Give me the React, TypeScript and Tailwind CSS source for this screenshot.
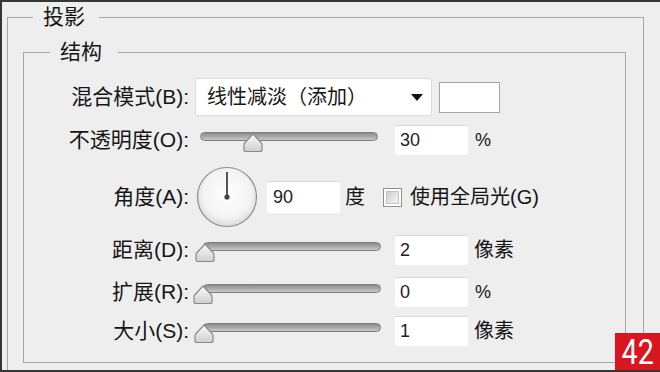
import React from 'react';

// slider thumb: pointed top, rounded base
const Thumb: React.FC = () => (
  <svg width="20" height="20" viewBox="0 0 20 20">
    <defs>
      <linearGradient id="thumbFill" x1="0" y1="0" x2="0" y2="1">
        <stop offset="0" stopColor="#fbfbfb" />
        <stop offset="1" stopColor="#cfcfcf" />
      </linearGradient>
    </defs>
    <path
      d="M10 1 L18 9.5 Q19 10.5 19 12 L19 16.5 Q19 18.5 17 18.5 L3 18.5 Q1 18.5 1 16.5 L1 12 Q1 10.5 2 9.5 Z"
      fill="url(#thumbFill)"
      stroke="#8a8a8a"
      strokeWidth="1.2"
    />
  </svg>
);

const Slider: React.FC<{ value: number }> = ({ value }) => (
  <div className="relative w-[178px] h-[21px] self-start mt-[7px]">
    <div className="h-[9px] rounded-full border border-[#7d7d7d] bg-gradient-to-b from-[#8c8c8c] via-[#a9a9a9] to-[#c9c9c9]" />
    <div className="absolute top-[1px] -ml-[10px]" style={{ left: `${value}%` }}>
      <Thumb />
    </div>
  </div>
);

const NumBox: React.FC<{ value: string }> = ({ value }) => (
  <div className="w-[73px] h-[30px] bg-white border-t border-[#d6d6d6] rounded-[2px] flex items-center pl-[5px] text-[18px] text-[#222]">
    {value}
  </div>
);

const Label: React.FC<{ children: React.ReactNode }> = ({ children }) => (
  <div className="w-[165px] text-right text-[21px] text-[#151515] shrink-0 whitespace-nowrap">{children}</div>
);

export default function App() {
  return (
    <div className="relative w-[660px] h-[372px] overflow-hidden bg-[#eeeeee] border-l-2 border-t-2 border-b-2 border-[#363636] font-['Liberation_Sans','Noto_Sans_CJK_SC',sans-serif]">
      <fieldset className="ml-[5px] mt-[2px] w-[637px] h-[420px] border border-[#a6a6a6] pl-[15px]">
        <legend className="ml-[10px] pl-[10px] pr-[14px] text-[21px] leading-[26px] text-[#151515]">投影</legend>

        <fieldset className="mt-[10px] w-[603px] border border-[#a6a6a6] pb-[16px]">
          <legend className="ml-[26px] pl-[10px] pr-[16px] text-[21px] leading-[24px] text-[#151515]">结构</legend>

          {/* 混合模式 */}
          <div className="mt-[14px] h-[38px] flex items-center">
            <Label>混合模式(B):</Label>
            <div className="ml-[6px] w-[237px] h-[38px] bg-white border border-[#dcdcdc] rounded-[2px] flex items-center pl-[11px] pr-[8px] text-[20px] text-[#151515]">
              <span className="flex-1 whitespace-nowrap">线性减淡（添加）</span>
              <svg width="12" height="7" viewBox="0 0 12 7">
                <polygon points="0,0 12,0 6,7" fill="#111" />
              </svg>
            </div>
            <div className="ml-[7px] w-[61px] h-[31px] bg-white border border-[#a3a3a3]" />
          </div>

          {/* 不透明度 */}
          <div className="mt-[9px] h-[30px] flex items-center">
            <Label>不透明度(O):</Label>
            <div className="ml-[11px] flex h-full">
              <Slider value={30} />
            </div>
            <div className="ml-[17px]">
              <NumBox value="30" />
            </div>
            <span className="ml-[7px] text-[18px] text-[#151515]">%</span>
          </div>

          {/* 角度 */}
          <div className="mt-[12px] h-[60px] flex items-center">
            <Label>角度(A):</Label>
            <svg className="ml-[7px] shrink-0" width="62" height="62" viewBox="0 0 62 62">
              <defs>
                <radialGradient id="dialFill" cx="0.5" cy="0.45" r="0.55">
                  <stop offset="0" stopColor="#ffffff" />
                  <stop offset="0.75" stopColor="#f3f3f3" />
                  <stop offset="1" stopColor="#d9d9d9" />
                </radialGradient>
              </defs>
              <circle cx="31" cy="31" r="29.5" fill="url(#dialFill)" stroke="#8e8e8e" strokeWidth="1.2" />
              <line x1="31" y1="31" x2="31" y2="6" stroke="#555" strokeWidth="2" />
              <circle cx="31" cy="31" r="2.6" fill="#444" />
            </svg>
            <div className="ml-[9px] w-[73px] h-[32px] bg-white border-t border-[#d6d6d6] rounded-[2px] flex items-center pl-[6px] text-[18px] text-[#222]">
              90
            </div>
            <span className="ml-[5px] text-[20px] text-[#151515]">度</span>
            <div className="ml-[18px] w-[19px] h-[19px] border border-[#8f8f8f] bg-white p-[2px]">
              <div className="w-full h-full bg-gradient-to-br from-[#cfcfcf] to-[#f5f5f5] border border-[#c2c2c2]" />
            </div>
            <span className="ml-[8px] text-[20px] text-[#151515] whitespace-nowrap">使用全局光(G)</span>
          </div>

          {/* 距离 */}
          <div className="mt-[8px] h-[30px] flex items-center">
            <Label>距离(D):</Label>
            <div className="ml-[14px] flex h-full">
              <Slider value={1} />
            </div>
            <div className="ml-[14px]">
              <NumBox value="2" />
            </div>
            <span className="ml-[6px] text-[20px] text-[#151515]">像素</span>
          </div>

          {/* 扩展 */}
          <div className="mt-[12px] h-[30px] flex items-center">
            <Label>扩展(R):</Label>
            <div className="ml-[14px] flex h-full">
              <Slider value={0} />
            </div>
            <div className="ml-[14px]">
              <NumBox value="0" />
            </div>
            <span className="ml-[7px] text-[18px] text-[#151515]">%</span>
          </div>

          {/* 大小 */}
          <div className="mt-[9px] h-[30px] flex items-center">
            <Label>大小(S):</Label>
            <div className="ml-[14px] flex h-full">
              <Slider value={0.5} />
            </div>
            <div className="ml-[14px]">
              <NumBox value="1" />
            </div>
            <span className="ml-[6px] text-[20px] text-[#151515]">像素</span>
          </div>
        </fieldset>
      </fieldset>

      {/* page badge */}
      <div className="absolute right-0 -bottom-[2px] w-[45px] h-[39px] bg-[#d9161f] flex items-center justify-center">
        <span className="inline-block scale-x-[0.82] text-white text-[35px] leading-none font-['Roboto',sans-serif]">42</span>
      </div>
    </div>
  );
}
